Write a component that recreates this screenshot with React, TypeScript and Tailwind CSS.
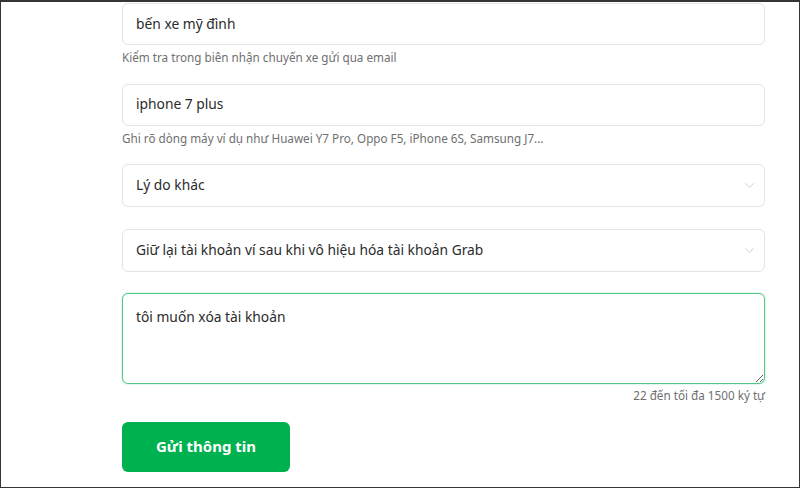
import { ChevronDown } from 'lucide-react';

const font = { fontFamily: '"Noto Sans", "Open Sans", sans-serif' };

function TextField({ value, hint }: { value: string; hint?: string }) {
  return (
    <div>
      <div className="h-[42px] w-full rounded-md border border-[#e3e3e3] bg-white px-[13px] flex items-center text-[13.8px] text-[#2b2b2b]">
        {value}
      </div>
      {hint && <p className="mt-[4px] text-[11.7px] text-[#6f6f6f]">{hint}</p>}
    </div>
  );
}

function SelectField({ value }: { value: string }) {
  return (
    <div className="h-[43px] w-full rounded-md border border-[#e3e3e3] bg-white pl-[13px] pr-[7px] flex items-center justify-between text-[13.8px] text-[#2b2b2b]">
      <span>{value}</span>
      <ChevronDown size={15} strokeWidth={1.2} className="text-[#bdbdbd]" />
    </div>
  );
}

export default function App() {
  return (
    <div
      className="w-[800px] h-[488px] overflow-hidden bg-white border border-t-2 border-[#353535]"
      style={font}
    >
      <div className="w-[643px] ml-[121px] pt-px">
        <TextField value="bến xe mỹ đình" hint="Kiểm tra trong biên nhận chuyến xe gửi qua email" />
        <div className="mt-[17px]">
          <TextField
            value="iphone 7 plus"
            hint="Ghi rõ dòng máy ví dụ như Huawei Y7 Pro, Oppo F5, iPhone 6S, Samsung J7..."
          />
        </div>
        <div className="mt-[17px]">
          <SelectField value="Lý do khác" />
        </div>
        <div className="mt-[22px]">
          <SelectField value="Giữ lại tài khoản ví sau khi vô hiệu hóa tài khoản Grab" />
        </div>
        <div className="mt-[21px]">
          <textarea
            readOnly
            defaultValue="tôi muốn xóa tài khoản"
            className="block w-full h-[91px] rounded-md border border-[#52c98a] shadow-[0_0_2px_#9fe3bd] bg-white px-[13px] pt-[13px] text-[13.8px] text-[#2b2b2b] outline-none resize-y"
            style={font}
          />
          <p className="mt-[3px] text-right text-[11.7px] text-[#6f6f6f]">22 đến tối đa 1500 ký tự</p>
        </div>
        <button className="mt-[17px] h-[50px] w-[168px] rounded-md bg-[#00b14f] text-white text-[15px] font-bold">
          Gửi thông tin
        </button>
      </div>
    </div>
  );
}
